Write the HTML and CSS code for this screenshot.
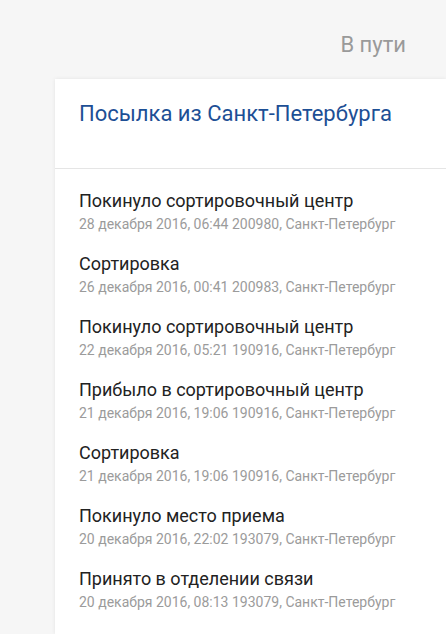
FILE: index.html
```html
<!DOCTYPE html>
<html lang="ru">
<head>
<meta charset="utf-8">
<link rel="stylesheet" href="styles.css">
</head>
<body>
<div class="page">
  <div class="status">В пути</div>
  <div class="card">
    <div class="card-head">Посылка из Санкт-Петербурга</div>
    <ul class="events">
      <li class="event"><div class="ev-title">Покинуло сортировочный центр</div><div class="ev-meta">28 декабря 2016, 06:44 200980, Санкт-Петербург</div></li>
      <li class="event"><div class="ev-title">Сортировка</div><div class="ev-meta">26 декабря 2016, 00:41 200983, Санкт-Петербург</div></li>
      <li class="event"><div class="ev-title">Покинуло сортировочный центр</div><div class="ev-meta">22 декабря 2016, 05:21 190916, Санкт-Петербург</div></li>
      <li class="event"><div class="ev-title">Прибыло в сортировочный центр</div><div class="ev-meta">21 декабря 2016, 19:06 190916, Санкт-Петербург</div></li>
      <li class="event"><div class="ev-title">Сортировка</div><div class="ev-meta">21 декабря 2016, 19:06 190916, Санкт-Петербург</div></li>
      <li class="event"><div class="ev-title">Покинуло место приема</div><div class="ev-meta">20 декабря 2016, 22:02 193079, Санкт-Петербург</div></li>
      <li class="event"><div class="ev-title">Принято в отделении связи</div><div class="ev-meta">20 декабря 2016, 08:13 193079, Санкт-Петербург</div></li>
    </ul>
  </div>
</div>
</body>
</html>
```

FILE: styles.css
```css
html, body {
  margin: 0;
  padding: 0;
  background: #f6f6f6;
  font-family: Roboto, "Liberation Sans", sans-serif;
  overflow: hidden;
}
.page {
  width: 446px;
  height: 634px;
  display: flex;
  flex-direction: column;
}
.status {
  align-self: flex-end;
  margin-right: 40px;
  padding-top: 31px;
  height: 79px;
  box-sizing: border-box;
  font-size: 22px;
  line-height: 28px;
  color: #9a9a9a;
}
.card {
  margin-left: 55px;
  flex: 1;
  background: #fff;
  box-shadow: 0 0 4px rgba(0,0,0,0.08);
}
.card-head {
  height: 90px;
  box-sizing: border-box;
  padding: 20px 24px 0;
  font-size: 22px;
  line-height: 30px;
  color: #1d4f95;
  border-bottom: 1px solid #e5e5e5;
}
.events {
  list-style: none;
  margin: 0;
  padding: 20px 24px 0;
}
.event {
  height: 63px;
}
.ev-title {
  font-size: 18px;
  line-height: 24px;
  color: #222;
}
.ev-meta {
  margin-top: 2px;
  font-size: 14px;
  line-height: 18px;
  color: #9b9b9b;
}
```
